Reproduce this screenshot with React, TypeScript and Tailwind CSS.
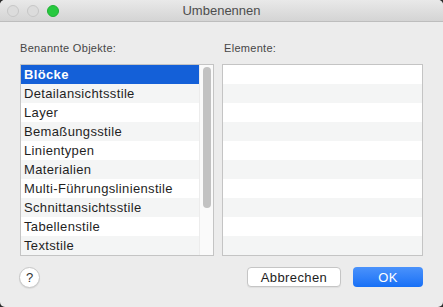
import React from "react";

const items = [
  "Blöcke",
  "Detailansichtsstile",
  "Layer",
  "Bemaßungsstile",
  "Linientypen",
  "Materialien",
  "Multi-Führungslinienstile",
  "Schnittansichtsstile",
  "Tabellenstile",
  "Textstile",
];

export default function App() {
  return (
    <div
      className="w-[443px] h-[307px] bg-[#2b2b2b] overflow-hidden"
      style={{ fontFamily: '"Liberation Sans", Arial, sans-serif' }}
    >
      <div className="w-[443px] h-[307px] bg-[#ececec] rounded-[5px] overflow-hidden flex flex-col">
        {/* Title bar */}
        <div className="relative h-[22px] shrink-0 bg-gradient-to-b from-[#e9e9e9] to-[#d4d4d4] border-b border-[#bdbdbd] flex items-center justify-center">
          <div className="absolute left-[7px] top-[5px] flex gap-[8px]">
            <div className="w-[12px] h-[12px] rounded-full bg-[#dcdcdc] border border-[#c6c6c6]" />
            <div className="w-[12px] h-[12px] rounded-full bg-[#dcdcdc] border border-[#c6c6c6]" />
            <div className="w-[12px] h-[12px] rounded-full bg-[#27c93f] border border-[#1fb034]" />
          </div>
          <span className="text-[13px] text-[#4d4d4d] leading-none">Umbenennen</span>
        </div>

        {/* Content */}
        <div className="pl-[20px] pr-[20px] pt-[19px] flex flex-col">
          <div className="flex gap-[8px]">
            <div className="flex flex-col w-[194px]">
              <div className="h-[14px] text-[11px] leading-[14px] tracking-[0.3px] text-[#464646] mb-[9px]">
                Benannte Objekte:
              </div>
              <div className="h-[192px] border border-[#c4c4c4] bg-white flex">
                <div className="flex-1 flex flex-col">
                  {items.map((t, i) => (
                    <div
                      key={t}
                      className={
                        "h-[19px] pl-[3px] flex items-center text-[13px] tracking-[0.35px] leading-none whitespace-nowrap " +
                        (i === 0
                          ? "bg-[#1460d8] text-white font-bold"
                          : i % 2 === 1
                          ? "bg-[#f4f5f5] text-[#1f1f1f]"
                          : "bg-white text-[#1f1f1f]")
                      }
                    >
                      {t}
                    </div>
                  ))}
                </div>
                <div className="w-[14px] bg-[#fafafa] border-l border-[#ececec] pt-[2px] flex justify-center">
                  <div className="w-[8px] h-[141px] rounded-full bg-[#c2c2c2]" />
                </div>
              </div>
            </div>
            <div className="flex flex-col w-[201px]">
              <div className="h-[14px] text-[11px] leading-[14px] tracking-[0.3px] text-[#464646] mb-[9px] pl-[2px]">
                Elemente:
              </div>
              <div className="h-[192px] border border-[#c4c4c4] bg-white flex flex-col">
                {items.map((t, i) => (
                  <div
                    key={t}
                    className={"h-[19px] " + (i % 2 === 1 ? "bg-[#f4f5f5]" : "bg-white")}
                  />
                ))}
              </div>
            </div>
          </div>

          {/* Bottom row */}
          <div className="flex items-center mt-[11px] h-[20px]">
            <div className="w-[21px] h-[21px] rounded-full bg-white border border-[#c6c6c6] shadow-[0_1px_1px_rgba(0,0,0,0.08)] flex items-center justify-center text-[13px] text-[#333] leading-none ml-[-1px]">
              ?
            </div>
            <div className="flex-1" />
            <div className="w-[94px] h-[20px] rounded-[4px] bg-white border border-[#c5c5c5] shadow-[0_1px_1px_rgba(0,0,0,0.06)] flex items-center justify-center text-[13px] tracking-[0.4px] text-[#1d1d1d] leading-none">
              Abbrechen
            </div>
            <div className="w-[70px] h-[20px] ml-[12px] rounded-[4px] bg-gradient-to-b from-[#4a92fb] to-[#1670f6] flex items-center justify-center text-[13px] tracking-[0.4px] text-white leading-none">
              OK
            </div>
          </div>
        </div>
      </div>
    </div>
  );
}
